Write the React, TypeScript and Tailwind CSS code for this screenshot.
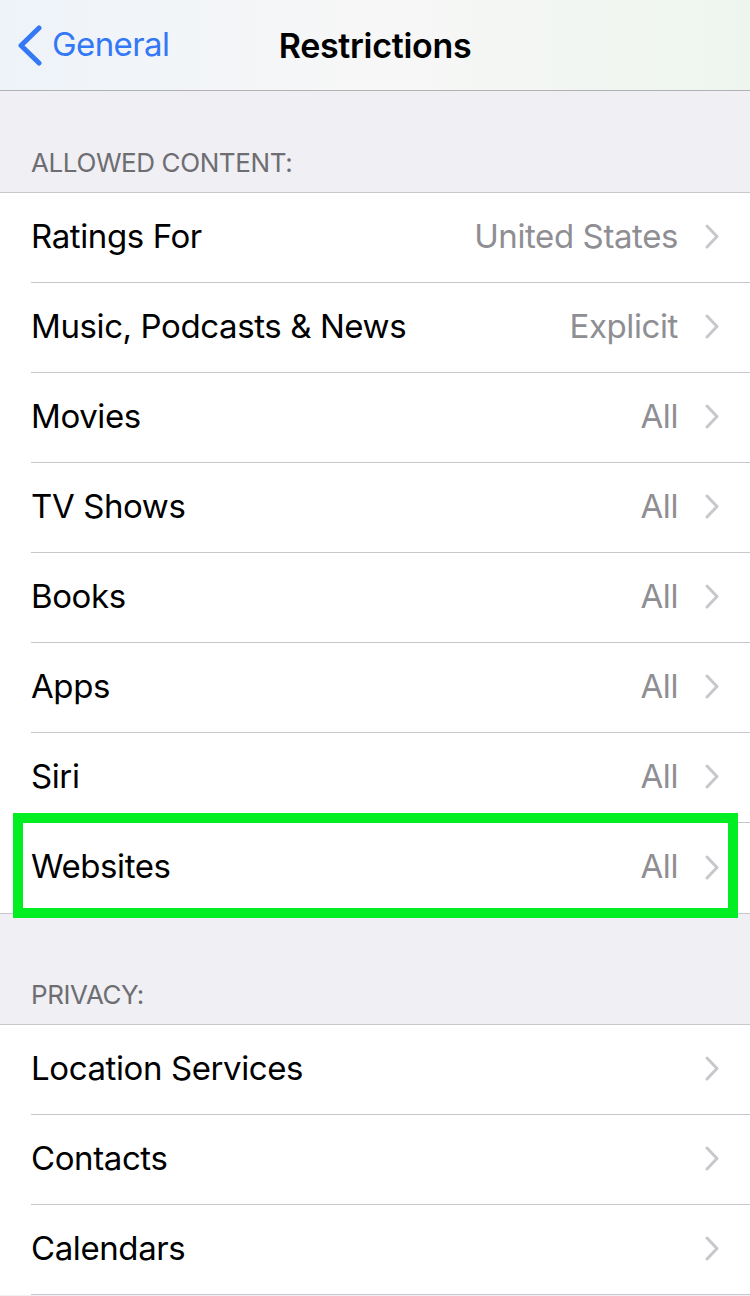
const allowed = [
  { label: "Ratings For", value: "United States" },
  { label: "Music, Podcasts & News", value: "Explicit" },
  { label: "Movies", value: "All" },
  { label: "TV Shows", value: "All" },
  { label: "Books", value: "All" },
  { label: "Apps", value: "All" },
  { label: "Siri", value: "All" },
  { label: "Websites", value: "All", highlight: true },
]

const privacy = [
  { label: "Location Services" },
  { label: "Contacts" },
  { label: "Calendars" },
]

type RowProps = {
  label: string
  value?: string
  last?: boolean
  highlight?: boolean
}

function Chevron() {
  return (
    <svg width="14" height="25" viewBox="0 0 14 25" fill="none" className="shrink-0">
      <path
        d="M2 2L12 12.5L2 23"
        stroke="#c7c7cc"
        strokeWidth="3"
        strokeLinecap="round"
        strokeLinejoin="round"
      />
    </svg>
  )
}

function Row({ label, value, last, highlight }: RowProps) {
  return (
    <div className="relative h-[90px] bg-white pl-[31px]">
      <div
        className={
          last
            ? "flex h-full items-center pr-[31px] pb-[2px]"
            : "flex h-full items-center border-b border-[#c8c7cc] pr-[31px] pb-[2px]"
        }
      >
        <span className="flex-1 text-[33px] tracking-[-0.4px] text-black">{label}</span>
        {value && (
          <span className="mr-[27px] text-[33px] tracking-[-0.4px] text-[#8e8e93]">
            {value}
          </span>
        )}
        <Chevron />
      </div>
      {highlight && (
        <div className="pointer-events-none absolute -top-[10px] -bottom-[5px] left-[13px] right-[12px] border-[10px] border-[#00ee22]" />
      )}
    </div>
  )
}

function SectionHeader({ title, height }: { title: string; height: string }) {
  return (
    <div className={`flex items-end px-[31px] pb-[14px] ${height}`}>
      <span className="text-[26px] leading-[30px] tracking-[-0.4px] text-[#6d6d72]">
        {title}
      </span>
    </div>
  )
}

export default function App() {
  return (
    <div
      className="min-h-[1296px] w-[750px] overflow-hidden bg-[#efeff4]"
      style={{ fontFamily: "Inter, 'Noto Sans', sans-serif" }}
    >
      <div className="relative flex h-[91px] items-center border-b border-[#b2b2b2] bg-gradient-to-r from-[#eef3f9] via-[#f7f7f7] to-[#eef5ee]">
        <div className="flex items-center pl-[17px]">
          <svg width="25" height="41" viewBox="0 0 25 41" fill="none">
            <path
              d="M22 3L4 20.5L22 38"
              stroke="#3478f6"
              strokeWidth="5"
              strokeLinecap="round"
              strokeLinejoin="round"
            />
          </svg>
          <span className="ml-[10px] text-[33px] tracking-[-0.6px] text-[#3478f6]">
            General
          </span>
        </div>
        <span className="absolute left-1/2 -translate-x-1/2 text-[34px] font-semibold tracking-[-0.3px] text-black">
          Restrictions
        </span>
      </div>

      <SectionHeader title="ALLOWED CONTENT:" height="h-[101px]" />
      <div className="border-y border-[#c8c7cc]">
        {allowed.map((r, i) => (
          <Row
            key={r.label}
            label={r.label}
            value={r.value}
            highlight={r.highlight}
            last={i === allowed.length - 1}
          />
        ))}
      </div>

      <SectionHeader title="PRIVACY:" height="h-[110px]" />
      <div className="border-t border-[#c8c7cc]">
        {privacy.map((r) => (
          <Row key={r.label} label={r.label} />
        ))}
      </div>
    </div>
  )
}
